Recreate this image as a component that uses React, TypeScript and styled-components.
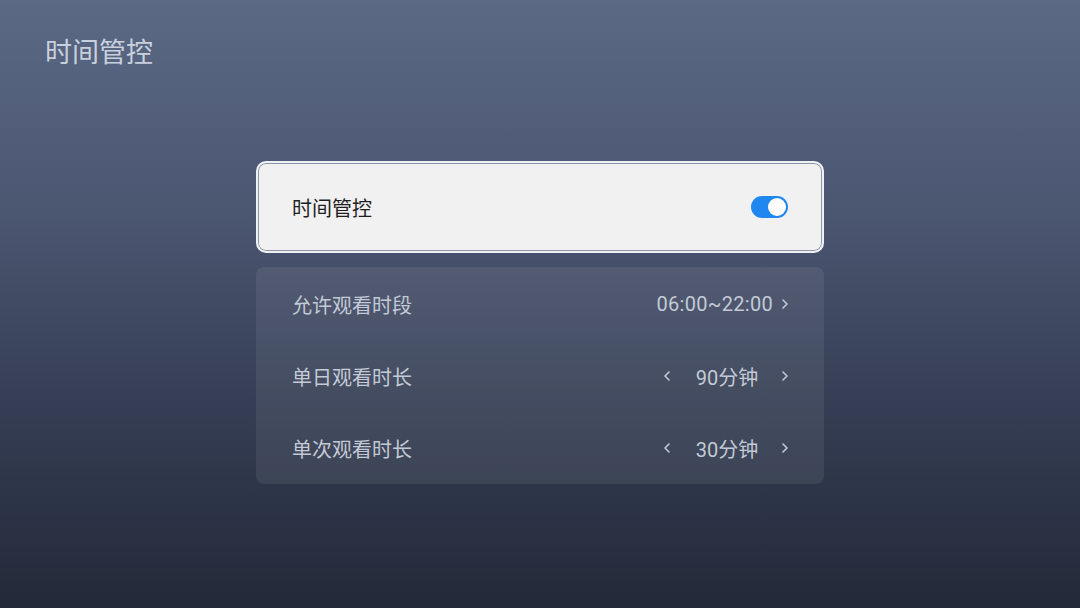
import React from 'react';
import styled, { createGlobalStyle } from 'styled-components';

const GlobalStyle = createGlobalStyle`
    html, body {
        margin: 0;
        padding: 0;
    }
    body {
        font-family: Roboto, "Noto Sans CJK SC", sans-serif;
    }
`;

const Screen = styled.div`
    width: 1080px;
    height: 608px;
    overflow: hidden;
    background: linear-gradient(180deg, #5b6985 0%, #4b5671 35%, #363f55 65%, #222a39 100%);
    display: flex;
    flex-direction: column;
`;

const Title = styled.h1`
    margin: 0;
    padding: 34px 0 0 45px;
    font-size: 27px;
    font-weight: 400;
    line-height: 38px;
    color: #c9d0dd;
`;

const Content = styled.div`
    margin: 89px auto 0;
    width: 568px;
    display: flex;
    flex-direction: column;
    gap: 14px;
`;

const SwitchCard = styled.div`
    height: 92px;
    box-sizing: border-box;
    padding: 0 34px 0 34px;
    display: flex;
    align-items: center;
    justify-content: space-between;
    background: #f1f1f1;
    border: 2px solid #eef1f5;
    border-radius: 10px;
    box-shadow: inset 0 0 0 1px #8e96a4;
`;

const CardLabel = styled.span`
    font-size: 20px;
    color: #1f1f1f;
`;

const Toggle = styled.div<{ on: boolean }>`
    width: 37px;
    height: 22px;
    border-radius: 11px;
    background: ${p => (p.on ? '#1e88f0' : '#9aa2b0')};
    display: flex;
    align-items: center;
    justify-content: ${p => (p.on ? 'flex-end' : 'flex-start')};
    padding: 0 2px;
    box-sizing: border-box;
`;

const Knob = styled.div`
    width: 18px;
    height: 18px;
    border-radius: 50%;
    background: #fff;
`;

const Panel = styled.div`
    background: rgba(255, 255, 255, 0.07);
    border-radius: 8px;
    padding: 1px 0 0;
`;

const Row = styled.div`
    height: 72px;
    padding: 0 35px 0 36px;
    display: flex;
    align-items: center;
    justify-content: space-between;
    color: #c3cad6;
`;

const RowLabel = styled.span`
    font-size: 20px;
`;

const Value = styled.div`
    display: flex;
    align-items: center;
    font-size: 20px;
`;

const Stepper = styled.span`
    display: inline-block;
    min-width: 64px;
    margin: 0 22px 0 24px;
    text-align: center;
`;

const ChevronIcon = ({ dir }: { dir: 'left' | 'right' }) => (
    <svg width="8" height="12" viewBox="0 0 8 12">
        <polyline
            points={dir === 'right' ? '2,2 6,6 2,10' : '6,2 2,6 6,10'}
            fill="none"
            stroke="#c3cad6"
            strokeWidth="1.6"
            strokeLinecap="round"
            strokeLinejoin="round"
        />
    </svg>
);

const RangeText = styled.span`
    margin-right: 8px;
    letter-spacing: 0.3px;
`;

type StepRow = { label: string; value: string };

const steps: StepRow[] = [
    { label: '单日观看时长', value: '90分钟' },
    { label: '单次观看时长', value: '30分钟' },
];

export default function App() {
    return (
        <Screen>
            <GlobalStyle />
            <Title>时间管控</Title>
            <Content>
                <SwitchCard>
                    <CardLabel>时间管控</CardLabel>
                    <Toggle on>
                        <Knob />
                    </Toggle>
                </SwitchCard>
                <Panel>
                    <Row>
                        <RowLabel>允许观看时段</RowLabel>
                        <Value>
                            <RangeText>06:00~22:00</RangeText>
                            <ChevronIcon dir="right" />
                        </Value>
                    </Row>
                    {steps.map(s => (
                        <Row key={s.label}>
                            <RowLabel>{s.label}</RowLabel>
                            <Value>
                                <ChevronIcon dir="left" />
                                <Stepper>{s.value}</Stepper>
                                <ChevronIcon dir="right" />
                            </Value>
                        </Row>
                    ))}
                </Panel>
            </Content>
        </Screen>
    );
}
